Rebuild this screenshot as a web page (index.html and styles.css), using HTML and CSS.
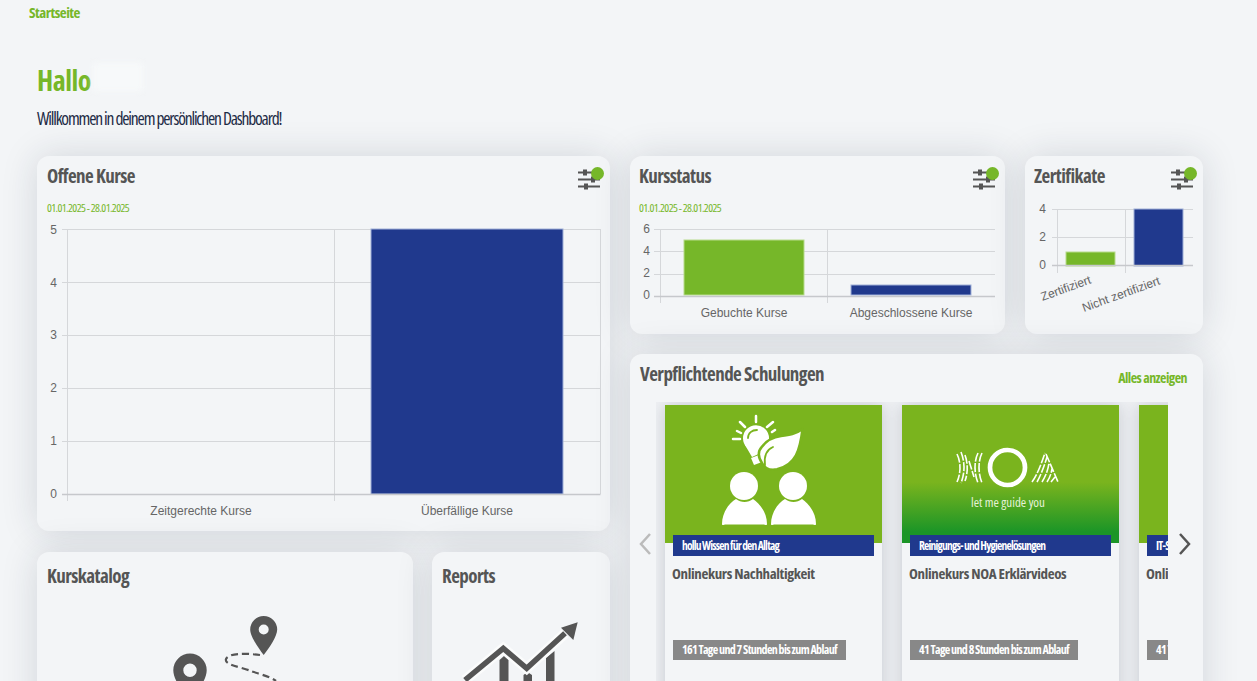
FILE: index.html
```html
<!DOCTYPE html>
<html lang="de">
<head>
<meta charset="utf-8">
<title>Dashboard</title>
<link rel="stylesheet" href="styles.css">
</head>
<body>
<nav class="crumbs"><a class="crumb">Startseite</a></nav>
<header class="greeting">
  <h1 class="hello">Hallo <span class="redacted"></span></h1>
  <p class="welcome">Willkommen in deinem persönlichen Dashboard!</p>
</header>
<main class="grid">
  <div class="col">
    <section class="card card-open">
      <div class="card-head">
        <h2 class="card-title">Offene Kurse</h2>
        <span class="filter"><svg width="22" height="22" viewBox="0 0 22 22"><path class="filter-lines" d="M0 3.500h22M0 10.500h22M0 17.500h22"/><path class="pin" d="M5 0.500h4v6h-4zM13 7.500h4v6h-4zM6 14.500h4v6h-4z"/></svg><i class="dot"></i></span>
      </div>
      <p class="range">01.01.2025 - 28.01.2025</p>
      <svg class="chart" width="573" height="300" viewBox="0 0 573 300">
        <g class="grid-lines">
          <path d="M25 8.500H563.500M25 61.500H563.500M25 114.500H563.500M25 167.500H563.500M25 220.500H563.500"/>
          <path d="M30.500 8V280M297.500 8V280M563.500 8V273"/>
        </g>
        <rect class="bar-blue" x="334" y="8" width="192" height="265"/>
        <path class="axis" d="M25 273.500H563.500"/>
        <g class="tick" text-anchor="end"><text x="20" y="13">5</text><text x="20" y="66">4</text><text x="20" y="118">3</text><text x="20" y="171">2</text><text x="20" y="224">1</text><text x="20" y="277">0</text></g>
        <g class="tick" text-anchor="middle"><text x="164" y="294">Zeitgerechte Kurse</text><text x="430" y="294">Überfällige Kurse</text></g>
      </svg>
    </section>
    <div class="row-tiles">
      <section class="card tile">
        <h2 class="card-title">Kurskatalog</h2>
        <svg class="tile-icon" width="160" height="100" viewBox="0 0 160 100">
          <path class="pin" fill-rule="evenodd" d="M118.700 6a13.500 13.500 0 0 1 13.500 13.500c0 7-8.500 19-13.500 25.500c-5-6.500-13.500-18.500-13.500-25.500a13.500 13.500 0 0 1 13.500-13.500zm0 8.500a5 5 0 1 0 0 10a5 5 0 0 0 0-10z"/>
          <path class="pin" fill-rule="evenodd" d="M45 43.500a16.700 16.700 0 0 1 16.700 16.700c0 10-11 24-16.700 31c-5.700-7-16.700-21-16.700-31a16.700 16.700 0 0 1 16.700-16.700zm0 10a6.700 6.700 0 1 0 0 13.400a6.700 6.700 0 0 0 0-13.400z"/>
          <path class="route" d="M115 45C100 43 84 43 81 49C79 55 96 57 106 61C114 64 124 66 131 71"/>
        </svg>
      </section>
      <section class="card tile">
        <h2 class="card-title">Reports</h2>
        <svg class="tile-icon" width="120" height="100" viewBox="0 0 120 100">
          <path class="pin" d="M38.500 50L43 46L47.500 50V90H38.500ZM62.500 65L66.500 62L71 65V95H62.500ZM85 48L93.500 41V90H85Z"/>
          <path class="trend-halo" d="M4 70L42.300 38.300L65.700 58.300L104 23.300"/>
          <path class="trend" d="M4 70L42.300 38.300L65.700 58.300L104 23.300"/>
          <path class="pin" d="M116.700 12.300L100 17.700L112.300 30Z"/>
        </svg>
      </section>
    </div>
  </div>
  <div class="col">
    <div class="row-stats">
      <section class="card card-stat">
        <div class="card-head">
          <h2 class="card-title">Kursstatus</h2>
          <span class="filter"><svg width="22" height="22" viewBox="0 0 22 22"><path class="filter-lines" d="M0 3.500h22M0 10.500h22M0 17.500h22"/><path class="pin" d="M5 0.500h4v6h-4zM13 7.500h4v6h-4zM6 14.500h4v6h-4z"/></svg><i class="dot"></i></span>
        </div>
        <p class="range">01.01.2025 - 28.01.2025</p>
        <svg class="chart" width="375" height="105" viewBox="0 0 375 105">
          <g class="grid-lines">
            <path d="M24 8.500H365M24 30.500H365M24 53.500H365"/>
            <path d="M30.500 8V82M197.500 8V82"/>
          </g>
          <rect class="bar-green" x="54" y="19" width="120" height="55"/>
          <rect class="bar-blue" x="221" y="64" width="120" height="10"/>
          <path class="axis" d="M24 75.500H365"/>
          <g class="tick" text-anchor="end"><text x="20" y="12">6</text><text x="20" y="34">4</text><text x="20" y="56">2</text><text x="20" y="78">0</text></g>
          <g class="tick" text-anchor="middle"><text x="114" y="96">Gebuchte Kurse</text><text x="281" y="96">Abgeschlossene Kurse</text></g>
        </svg>
      </section>
      <section class="card card-stat">
        <div class="card-head">
          <h2 class="card-title">Zertifikate</h2>
          <span class="filter"><svg width="22" height="22" viewBox="0 0 22 22"><path class="filter-lines" d="M0 3.500h22M0 10.500h22M0 17.500h22"/><path class="pin" d="M5 0.500h4v6h-4zM13 7.500h4v6h-4zM6 14.500h4v6h-4z"/></svg><i class="dot"></i></span>
        </div>
        <svg class="chart chart-cert" width="178" height="126" viewBox="0 0 178 126">
          <g class="grid-lines">
            <path d="M27 1.500H168M27 29.500H168"/>
            <path d="M32.500 1V65M100.500 1V65"/>
          </g>
          <rect class="bar-green" x="41" y="44" width="49" height="14"/>
          <rect class="bar-blue" x="109" y="1" width="49" height="57"/>
          <path class="axis" d="M27 57.500H168"/>
          <g class="tick" text-anchor="end"><text x="21" y="5">4</text><text x="21" y="33">2</text><text x="21" y="61">0</text></g>
          <g class="tick" text-anchor="end"><text transform="translate(67 75) rotate(-20)">Zertifiziert</text><text transform="translate(136 76) rotate(-20)">Nicht zertifiziert</text></g>
        </svg>
      </section>
    </div>
    <section class="card card-training">
      <div class="training-head">
        <h2 class="card-title">Verpflichtende Schulungen</h2>
        <a class="show-all">Alles anzeigen</a>
      </div>
      <div class="carousel">
        <svg class="arrow arrow-prev" width="14" height="24" viewBox="0 0 14 24"><path d="M12 2L3 12L12 22"/></svg>
        <svg class="arrow arrow-next" width="14" height="24" viewBox="0 0 14 24"><path d="M2 2L11 12L2 22"/></svg>
        <div class="viewport">
          <article class="slide">
            <div class="slide-img">
              <svg width="217" height="138" viewBox="0 0 217 138">
                <g fill="#fff">
                  <circle cx="79" cy="81" r="14"/><circle cx="128" cy="81" r="14"/>
                  <path d="M57 119C57 107 65 97 71 94C76 98 83 98 88 94C94 98 102 107 102 119C102 121 100 119.500 98 119.500H61C59 119.500 57 121 57 119Z"/>
                  <path d="M106 119C106 107 114 97 120 94C125 98 132 98 137 94C143 98 151 107 151 119C151 121 149 119.500 147 119.500H110C108 119.500 106 121 106 119Z"/>
                  <circle cx="91" cy="33.300" r="13"/>
                  <path d="M80 40L87 52L100 46L102 36Z"/>
                  <path d="M86 53L94 50L97 57L89 60Z"/>
                </g>
                <path class="leaf-vein" d="M83 33C83 28 87 25 92 25"/>
                <path class="leaf" d="M137.500 24C135 45 131 60 112 64.300C106 65.500 100 64 97 58C93 52 93 46 97 41.700C102 35 108 32 116 31C124 30 131 29 137.500 24Z"/>
                <path class="leaf-vein" d="M100 60C99 52 101 45 108 42"/>
                <path class="ray" d="M91 11V17M75 17L80 22M102 22L108 17M68 34H75M72 26L76 28M107 27L110 25"/>
              </svg>
            </div>
            <div class="slide-tag">hollu Wissen für den Alltag</div>
            <h3 class="slide-title">Onlinekurs Nachhaltigkeit</h3>
            <div class="slide-time">161 Tage und 7 Stunden bis zum Ablauf</div>
          </article>
          <article class="slide">
            <div class="slide-img slide-img-noa">
              <svg width="217" height="138" viewBox="0 0 217 138">
                <circle class="noa-ring" cx="105.500" cy="62.500" r="17.500"/>
                <g class="noa-stripes">
                  <path d="M55 49C59 57 59 68 55 77M59 47C63 57 63 68 59 78M63 50C66 58 66 68 63 76M67 56L72 72M76 48C72 56 72 68 76 78M80 48C76 56 76 68 80 78"/>
                  <path d="M130 77C135 70 139 60 143 48M135 77C138 72 142 62 145 52M140 77C143 72 146 66 147 58M145 77C147 74 149 70 150 64M144 49L156 77M149 77L153 72"/>
                </g>
                <text class="noa-text" x="106" y="102" text-anchor="middle">let me guide you</text>
              </svg>
            </div>
            <div class="slide-tag">Reinigungs- und Hygienelösungen</div>
            <h3 class="slide-title">Onlinekurs NOA Erklärvideos</h3>
            <div class="slide-time">41 Tage und 8 Stunden bis zum Ablauf</div>
          </article>
          <article class="slide">
            <div class="slide-img"></div>
            <div class="slide-tag">IT-Sicherheit</div>
            <h3 class="slide-title">Onlinekurs IT-Sicherheit</h3>
            <div class="slide-time">41 Tage und 8 Stunden bis zum Ablauf</div>
          </article>
        </div>
      </div>
    </section>
  </div>
</main>
</body>
</html>
```

FILE: styles.css
```css
* { box-sizing: border-box; }
html, body { margin: 0; height: 681px; overflow: hidden; }
body {
  background: #f3f5f7;
  font-family: "Open Sans", sans-serif;
  font-stretch: 75%;
  color: #555;
}
.crumbs { padding: 1px 0 0 29px; height: 63px; }
.crumb { color: #76b729; font-size: 15px; letter-spacing: -.5px; font-weight: 700; line-height: 18px; }
.greeting { padding-left: 37px; height: 93px; }
.hello { margin: 0; color: #76b729; font-size: 28px; letter-spacing: -.5px; line-height: 34px; font-weight: 700; display: flex; gap: 2px; }
.redacted { display: block; width: 50px; height: 28px; background: #f7f9fa; filter: blur(3px); }
.welcome { margin: 10px 0 0; color: #1d2b45; font-size: 17.500px; letter-spacing: -1.150px; line-height: 22px; }
.grid { display: grid; grid-template-columns: 573px 573px; gap: 20px; padding-left: 37px; }
.col { display: flex; flex-direction: column; gap: 20px; min-width: 0; }
.card { background: #f3f5f7; border-radius: 12px; box-shadow: 0 0 36px rgba(30, 40, 60, .15); }
.card-head { display: flex; justify-content: space-between; padding: 8px 10px 0; height: 45px; }
.card-stat .card-head { padding-left: 9px; }
.card-title { margin: 0; color: #555; font-size: 19px; letter-spacing: -.55px; line-height: 24px; font-weight: 700; }
.filter { position: relative; display: block; width: 22px; height: 22px; margin: 5px 0 0; }
.filter svg { display: block; }
.filter-lines { stroke: #555; stroke-width: 1.800; fill: none; }
.dot { position: absolute; right: -4px; top: -2px; width: 13px; height: 13px; border-radius: 50%; background: #76b729; }
.range { margin: 0; padding-left: 10px; color: #76b729; font-size: 11.500px; letter-spacing: -.6px; line-height: 14px; height: 14px; }
.card-stat .range { padding-left: 9px; }
.chart { display: block; overflow: visible; }
.card-open { height: 375px; }
.card-open .chart { margin-top: 6px; }
.grid-lines path { stroke: #d5d7da; stroke-width: 1; fill: none; }
.axis { stroke: #c6c8cc; stroke-width: 1.500; fill: none; }
.tick text { font-family: "Liberation Sans", sans-serif; font-stretch: normal; font-size: 12px; fill: #666; }
.bar-blue { fill: #20398d; stroke: #9fb0d8; stroke-width: 1; }
.bar-green { fill: #76b729; stroke: #b7db8c; stroke-width: 1; }
.row-tiles { display: grid; grid-template-columns: 376px 178px; gap: 19px; margin-top: 1px; }
.tile { height: 300px; padding: 12px 10px 0; display: flex; flex-direction: column; align-items: flex-start; }
.tile-icon { align-self: center; margin-top: 22px; }
.pin { fill: #555; }
.route { fill: none; stroke: #555; stroke-width: 2.200; stroke-dasharray: 7 4; }
.trend, .trend-halo { fill: none; stroke-linejoin: miter; }
.trend { stroke: #555; stroke-width: 5.500; }
.trend-halo { stroke: #fbfcfc; stroke-width: 10.500; }
.leaf { fill: #fff; stroke: #7ab41e; stroke-width: 2.500; }
.leaf-vein { fill: none; stroke: #7ab41e; stroke-width: 1.800; stroke-linecap: round; }
.ray { fill: none; stroke: #fff; stroke-width: 2.500; stroke-linecap: round; }
.row-stats { display: grid; grid-template-columns: 375px 178px; gap: 20px; height: 178px; }
.card-stat { height: 178px; }
.card-stat .chart { margin-top: 6px; }
.card-stat .chart-cert { margin-top: 7px; }
.card-training { height: 420px; padding-top: 8px; }
.training-head { display: flex; justify-content: space-between; align-items: flex-start; padding: 0 16px 0 10px; height: 40px; }
.show-all { color: #76b729; font-size: 14px; letter-spacing: -.55px; font-weight: 700; margin-top: 8px; line-height: 16px; }
.carousel { position: relative; }
.viewport { margin-left: 26px; width: 512px; height: 360px; padding: 3px 0 0 9px; display: flex; gap: 20px; overflow: hidden; background: #eff1f4; }
.arrow { position: absolute; top: 130px; fill: none; stroke-width: 2.500; }
.arrow-prev { left: 8px; stroke: #bbb; }
.arrow-next { left: 548px; stroke: #555; }
.slide { flex: none; width: 217px; height: 340px; background: #f3f5f7; box-shadow: 0 0 16px rgba(30, 40, 60, .2); }
.slide-img { height: 138px; background: #7ab41e; }
.slide-img svg { display: block; }
.slide-img-noa { background: linear-gradient(#7ab41e 0, #7ab41e 56%, #1b9527 92%); }
.noa-ring { fill: none; stroke: #fff; stroke-width: 4.700; }
.noa-stripes path { fill: none; stroke: #fff; stroke-width: 1.600; stroke-dasharray: 9 1.500; }
.noa-text { font-size: 13px; fill: #e6f2d8; }
.slide-tag { margin: -8px 8px 0; height: 21px; background: #20398d; color: #fff; font-size: 11.500px; letter-spacing: -.78px; font-weight: 700; line-height: 21px; padding-left: 9px; position: relative; white-space: nowrap; overflow: hidden; }
.slide-title { margin: 8px 8px 0 7px; height: 76px; font-size: 15px; letter-spacing: -.36px; line-height: 18px; color: #555; white-space: nowrap; }
.slide-time { margin: 0 8px; width: fit-content; height: 20px; background: #888; color: #fff; font-size: 12px; letter-spacing: -.65px; font-weight: 700; line-height: 20px; padding: 0 9px; white-space: nowrap; }
```
